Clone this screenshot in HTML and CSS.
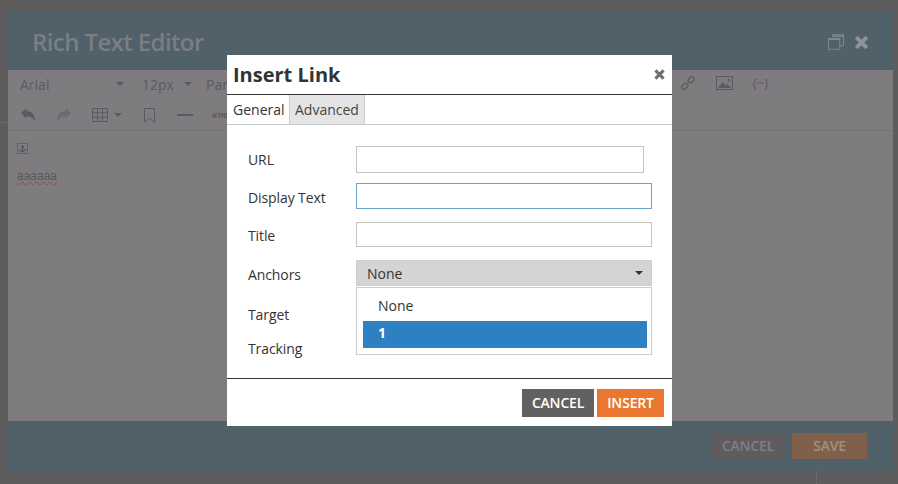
FILE: index.html
```html
<!DOCTYPE html>
<html lang="en">
<head>
<meta charset="utf-8">
<title>Rich Text Editor</title>
<link rel="stylesheet" href="styles.css">
</head>
<body>
<span class="bg-dots bg-dots-left"></span>
<span class="bg-dots bg-dots-bottom"></span>
<div class="window">
  <header class="win-head">
    <h1 class="win-title">Rich Text Editor</h1>
    <div class="win-actions">
      <svg class="i-restore" viewBox="0 0 16 16" width="16" height="16"><path d="M4.500 3.500V.7h11v10.800h-3.200" fill="none" stroke="#81868c" stroke-width="1"/><path d="M4.500 2.200h11" stroke="#81868c" stroke-width="1.600"/><rect x=".5" y="4.500" width="11.200" height="10.800" fill="#50616a" stroke="#81868c" stroke-width="1"/><path d="M.5 5.200h11.200" stroke="#81868c" stroke-width="1.600"/></svg>
      <svg viewBox="0 0 14 14" width="15" height="15"><path d="M2 2l10 10M12 2L2 12" stroke="#8f9398" stroke-width="3.800"/></svg>
    </div>
  </header>
  <div class="toolbar">
    <div class="tb-row tb-row1">
      <span class="tb-select tb-font">Arial<i class="caret"></i></span>
      <span class="tb-select tb-size">12px<i class="caret"></i></span>
      <span class="tb-select tb-para">Par</span>
      <span class="tb-right">
        <svg viewBox="0 0 16 16" width="16" height="16"><g fill="none" stroke="#5b5a5e" stroke-width="1.300"><rect x="-3.500" y="-2.300" width="7" height="4.600" rx="2.300" transform="translate(4.800 11.200) rotate(-45)"/><rect x="-3.500" y="-2.300" width="7" height="4.600" rx="2.300" transform="translate(11.200 4.800) rotate(-45)"/></g></svg>
        <svg viewBox="0 0 17 14" width="17" height="14"><rect x=".5" y=".5" width="16" height="13" fill="none" stroke="#5b5a5e"/><path d="M2 12l4.500-6 3 3.500 2-1.500 3.500 4z" fill="#5b5a5e"/><circle cx="13" cy="4" r="1.200" fill="#5b5a5e"/></svg>
        <span class="tb-var">{···}</span>
      </span>
    </div>
    <div class="tb-row tb-row2">
      <svg viewBox="0 0 16 16" width="16" height="16"><path d="M1 6l5.500-5v3c5 0 8.500 3 8.500 11-1.500-4-4-5.500-8.500-5.500V12z" fill="#5b5a5e"/></svg>
      <svg class="dim" viewBox="0 0 16 16" width="16" height="16"><path d="M15 6L9.500 1v3C4.500 4 1 7 1 15c1.500-4 4-5.500 8.500-5.500V12z" fill="#6d6b6f"/></svg>
      <span class="tb-table"><svg viewBox="0 0 16 14" width="16" height="14"><path d="M.5.500h15v13H.5zM.5 4.800h15M.5 9.200h15M5.500.500v13M10.500.500v13" fill="none" stroke="#5b5a5e"/></svg><i class="caret"></i></span>
      <svg viewBox="0 0 11 15" width="11" height="15"><path d="M.5.500h10v13.500l-5-3.500-5 3.500z" fill="none" stroke="#5b5a5e"/></svg>
      <span class="tb-hr"></span>
      <span class="tb-html">HTML</span>
    </div>
  </div>
  <main class="doc">
    <svg class="anchor" viewBox="0 0 11 11" width="11" height="11"><rect x=".5" y=".5" width="10" height="10" fill="none" stroke="#47464b" stroke-dasharray="1 1"/><path d="M5.500 2.500v6M2.500 6c0 2 1.500 2.500 3 2.500S8.500 8 8.500 6M4 3.800h3" fill="none" stroke="#47464b" stroke-width=".9"/></svg>
    <p class="doc-text">aaaaaa</p>
  </main>
  <footer class="win-foot">
    <button class="btn btn-bg-cancel">CANCEL</button>
    <button class="btn btn-bg-save">SAVE</button>
  </footer>
</div>

<section class="dialog">
  <header class="dlg-head">
    <h2 class="dlg-title">Insert Link</h2>
    <svg class="dlg-close" viewBox="0 0 10 10" width="11" height="11"><path d="M1.300 1.300l7.400 7.400M8.700 1.300L1.300 8.700" stroke="#6f6f6f" stroke-width="2.800"/></svg>
  </header>
  <nav class="tabs">
    <span class="tab tab-active">General</span>
    <span class="tab">Advanced</span>
  </nav>
  <form class="fields">
    <div class="field f-url"><label>URL</label><span class="input input-short"></span></div>
    <div class="field f-display"><label>Display Text</label><span class="input input-focus"></span></div>
    <div class="field f-title"><label>Title</label><span class="input"></span></div>
    <div class="field f-anchors"><label>Anchors</label><span class="select">None<i class="caret caret-dark"></i></span></div>
    <div class="field f-target"><label>Target</label></div>
    <div class="field f-tracking"><label>Tracking</label></div>
    <ul class="menu">
      <li class="opt">None</li>
      <li class="opt opt-on">1</li>
    </ul>
  </form>
  <footer class="dlg-foot">
    <button type="button" class="btn btn-cancel">CANCEL</button>
    <button type="button" class="btn btn-insert">INSERT</button>
  </footer>
</section>
</body>
</html>
```
FILE: styles.css
```css
* { box-sizing: border-box; }
html, body { margin: 0; height: 100%; }
body {
  width: 898px;
  height: 484px;
  overflow: hidden;
  background: #5f5c5e;
  padding: 11px 5px 13px 8px;
  font-family: "Open Sans", "Liberation Sans", sans-serif;
  position: relative;
}
.bg-dots { position: absolute; border: 0 dotted #777477; }
.bg-dots-left { left: 0; top: 122px; width: 8px; border-top-width: 1px; }
.bg-dots-bottom { left: 816px; top: 471px; height: 13px; border-left-width: 1px; }
.window {
  height: 460px;
  background: #7f7c7f;
  display: flex;
  flex-direction: column;
}
.win-head {
  height: 59px;
  flex: none;
  background: #50616a;
  display: flex;
  align-items: center;
  justify-content: space-between;
  padding: 3px 24px 0 24px;
}
.win-title { margin: 0; font-size: 24px; font-weight: 600; letter-spacing: -.6px; color: #7a7d84; line-height: 32px; }
.win-actions { display: flex; align-items: center; gap: 10px; }
.toolbar {
  height: 61px;
  flex: none;
  border-bottom: 1px solid #737073;
  color: #5b5a5e;
  font-size: 14px;
  padding: 0 12px;
}
.tb-row { display: flex; align-items: center; position: relative; }
.tb-row1 { height: 30px; padding-bottom: 2px; }
.tb-row2 { height: 30px; }
.tb-select { display: flex; align-items: center; }
.tb-font { width: 122px; gap: 67px; }
.tb-size { width: 64px; gap: 10px; }
.caret {
  display: inline-block;
  width: 0;
  height: 0;
  border-left: 4px solid transparent;
  border-right: 4px solid transparent;
  border-top: 4px solid #5b5a5e;
}
.tb-right {
  position: absolute;
  left: 660px;
  top: 5px;
  display: flex;
  align-items: center;
  gap: 20px;
}
.tb-var { font-size: 13px; letter-spacing: -.8px; line-height: 16px; margin-top: -1px; margin-left: -1px; }
.tb-row2 > svg:nth-child(2) { margin-left: 20px; }
.tb-table { display: flex; align-items: center; gap: 6px; margin-left: 20px; }
.tb-row2 > svg:nth-child(4) { margin-left: 22px; }
.tb-hr { width: 16px; height: 2px; background: #5b5a5e; margin-left: 22px; }
.tb-html { font-family: "Liberation Mono", monospace; font-size: 8px; letter-spacing: -.4px; font-weight: 700; margin-left: 19px; }
.doc { flex: 1; padding: 12px 9px 0; min-height: 0; }
.anchor { display: block; }
.doc-text {
  margin: 14px 0 0;
  font-size: 12px;
  line-height: 16px;
  color: #58565b;
  font-family: "Liberation Sans", sans-serif;
  text-decoration: underline wavy #8a4f4f 1px;
  text-underline-offset: 1px;
}
.win-foot {
  height: 50px;
  flex: none;
  background: #50616a;
  display: flex;
  justify-content: flex-end;
  align-items: center;
  gap: 7px;
  padding: 0 26px 0 0;
}
.btn {
  border: 0;
  padding: 0 0 2px;
  font-family: inherit;
  font-size: 14px;
  font-weight: 600;
  letter-spacing: -.2px;
  text-align: center;
}
.btn-bg-cancel { width: 74px; height: 26px; background: #5f5c5e; color: #7d7f84; }
.btn-bg-save { width: 75px; height: 26px; background: #80604a; color: #a08f84; }

.dialog {
  position: absolute;
  left: 227px;
  top: 55px;
  width: 445px;
  height: 371px;
  background: #fff;
  display: flex;
  flex-direction: column;
  color: #333;
}
.dlg-head {
  height: 40px;
  flex: none;
  border-bottom: 1px solid #333;
  display: flex;
  align-items: center;
  justify-content: space-between;
  padding: 0 7px 0 6px;
}
.dlg-title { margin: 0; font-size: 20px; font-weight: 700; line-height: 27px; color: #333; }
.tabs {
  height: 30px;
  flex: none;
  border-bottom: 1px solid #ccc;
  display: flex;
  font-size: 14px;
}
.tab {
  display: flex;
  align-items: center;
  padding: 0 5px;
  height: 29px;
  background: #e4e4e4;
  border-right: 1px solid #ccc;
  color: #444;
}
.tab-active { background: #fff; padding: 0 6px; color: #333; width: 63px; }
.fields { position: relative; flex: 1; min-height: 0; font-size: 14px; }
.field { position: absolute; left: 21px; right: 20px; display: flex; align-items: center; }
.field label { width: 108px; flex: none; color: #333; letter-spacing: -.1px; }
.input {
  display: block;
  width: 296px;
  height: 100%;
  border: 1px solid #c4c4c4;
  background: #fff;
}
.input-short { width: 288px; }
.input-focus { border-color: #6aa5c8; }
.f-url { top: 21px; height: 27px; }
.f-display { top: 58px; height: 26px; }
.f-title { top: 97px; height: 25px; }
.f-anchors { top: 135px; height: 26px; }
.f-display label, .f-title label, .f-anchors label { padding-top: 2px; }
.f-target { top: 178px; height: 22px; }
.f-tracking { top: 212px; height: 22px; }
.select {
  width: 296px;
  height: 100%;
  background: #d4d4d4;
  border: 1px solid #cfcfcf;
  padding-left: 10px;
  display: flex;
  align-items: center;
  justify-content: space-between;
  padding-right: 8px;
  color: #333;
}
.caret-dark { border-top-color: #333; }
.menu {
  position: absolute;
  left: 129px;
  top: 162px;
  width: 296px;
  height: 68px;
  margin: 0;
  padding: 6px;
  list-style: none;
  background: #fff;
  border: 1px solid #ccc;
}
.opt { height: 27px; line-height: 23px; padding-left: 15px; color: #333; }
.opt-on { background: #2d80c2; color: #fff; font-weight: 700; margin-right: -2px; }
.dlg-foot {
  height: 48px;
  flex: none;
  border-top: 1px solid #333;
  display: flex;
  justify-content: flex-end;
  align-items: flex-start;
  gap: 3px;
  padding: 10px 8px 0 0;
}
.btn-cancel { width: 72px; height: 28px; background: #616161; color: #fff; }
.btn-insert { width: 67px; height: 28px; background: #e97730; color: #fff; }
```
